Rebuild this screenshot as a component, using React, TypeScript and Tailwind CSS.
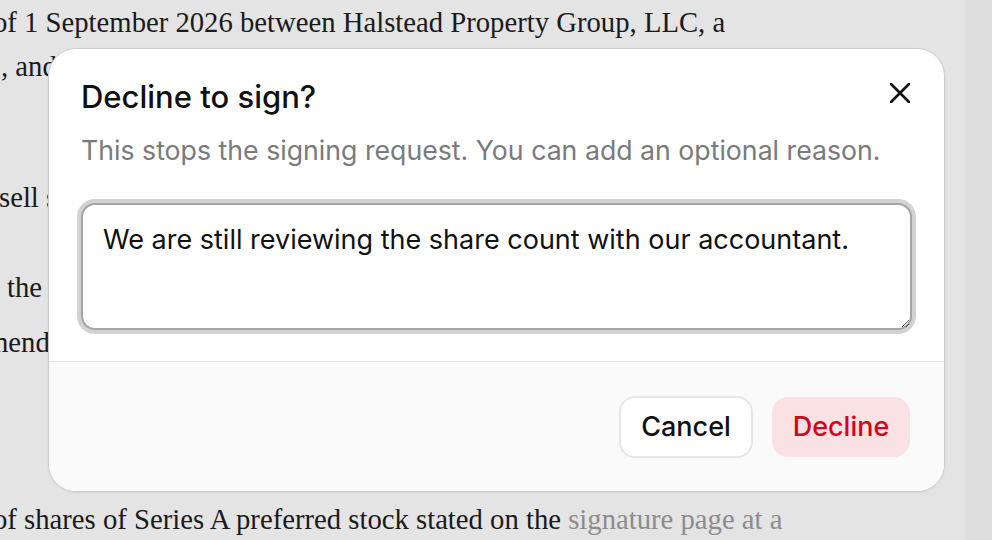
import React from "react";

export default function App() {
  return (
    <div className="relative w-[992px] h-[540px] overflow-hidden bg-[#e4e4e4] flex">
      <div
        className="flex-1 flex flex-col text-[28.7px] text-[#1a1a1a] leading-[44px] overflow-hidden"
        style={{ fontFamily: '"Liberation Serif", "Times New Roman", serif' }}
      >
        <div className="ml-[-7px] whitespace-nowrap h-[44px]">
          of 1 September 2026 between Halstead Property Group, LLC, a
        </div>
        <div className="ml-[1px] whitespace-nowrap h-[44px]">
          , and Wexford Holdings, Inc. (the “Purchaser”).
        </div>
        <div className="mt-[87px] ml-[-1px] whitespace-nowrap h-[44px]">
          sell shares of its capital stock to the Purchaser on the terms below.
        </div>
        <div className="mt-[46px] ml-[7px] whitespace-nowrap h-[44px]">
          the number of shares set forth herein, as amended.
        </div>
        <div className="mt-[11px] ml-[-6px] whitespace-nowrap h-[44px]">
          nendments and restatements thereto.
        </div>
        <div className="mt-[133px] ml-[-7px] whitespace-nowrap h-[44px]">
          of shares of Series A preferred stock stated on the{" "}
          <span className="text-[#8c8c8c]">signature page at a</span>
        </div>
      </div>
      <div className="w-[27px] h-full bg-[#dfdfdf]" />

      <div
        className="absolute left-[48px] top-[48px] w-[897px] h-[444px] rounded-[28px] border border-[#cdcdcd] bg-white overflow-hidden flex flex-col shadow-[0_1px_3px_rgba(0,0,0,0.06)]"
        style={{ fontFamily: 'Inter, "Noto Sans", sans-serif' }}
      >
        <div className="px-[32px] pt-[28px] pb-[31px] flex flex-col">
          <div className="flex items-start justify-between">
            <div className="text-[31px] leading-[40px] font-medium text-[#111]">
              Decline to sign?
            </div>
            <svg width="20" height="20" viewBox="0 0 20 20" className="mt-[6px] mr-[2px]">
              <path d="M1 1 L19 19 M19 1 L1 19" stroke="#111" strokeWidth="2.6" strokeLinecap="round" />
            </svg>
          </div>
          <div className="mt-[15px] text-[26.7px] leading-[36px] text-[#7a7a7a]">
            This stops the signing request. You can add an optional reason.
          </div>
          <textarea
            className="mt-[35px] h-[127px] w-full rounded-[14px] border-2 border-[#a5a5a5] ring-4 ring-[#d2d2d2] bg-white px-[20px] pt-[17px] pb-[10px] text-[27px] leading-[36px] text-[#111] outline-none"
            defaultValue="We are still reviewing the share count with our accountant."
          />
        </div>
        <div className="flex-1 border-t border-[#e4e4e4] bg-[#fafafa] flex items-start justify-end gap-[19px] px-[34px] pt-[34px]">
          <button className="h-[62px] w-[134px] rounded-[16px] border-2 border-[#e6e6e6] bg-white text-[27px] font-medium text-[#111]">
            Cancel
          </button>
          <button className="mt-[1px] h-[60px] w-[138px] rounded-[16px] bg-[#fae1e3] text-[27px] font-medium text-[#d7001a]">
            Decline
          </button>
        </div>
      </div>
    </div>
  );
}
